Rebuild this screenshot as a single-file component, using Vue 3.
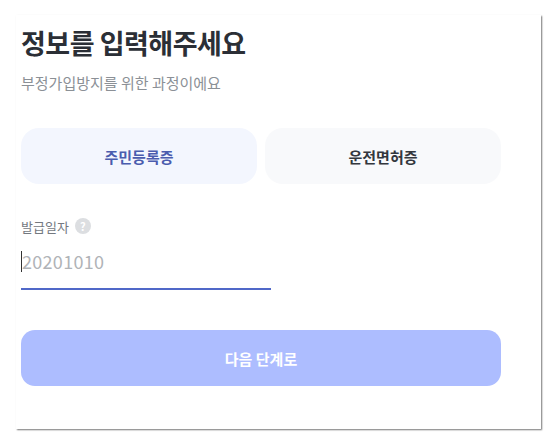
<script setup>
const tabs = [
  { label: '주민등록증', active: true },
  { label: '운전면허증', active: false },
]
</script>

<template>
  <main class="page">
    <section class="card">
      <h1 class="title">정보를 입력해주세요</h1>
      <p class="subtitle">부정가입방지를 위한 과정이에요</p>
      <div class="tabs">
        <button v-for="tab in tabs" :key="tab.label" class="tab" :class="{ active: tab.active }">
          {{ tab.label }}
        </button>
      </div>
      <div class="label-row">
        <span class="label">발급일자</span>
        <span class="help">?</span>
      </div>
      <div class="field">
        <span class="caret"></span>
        <span class="placeholder">20201010</span>
      </div>
      <button class="next">다음 단계로</button>
    </section>
  </main>
</template>

<style>
html, body { margin: 0; background: #fff; }
</style>

<style scoped>
.page {
  width: 555px;
  height: 443px;
  padding: 15px 0 0 16px;
  box-sizing: border-box;
  overflow: hidden;
  font-family: "Noto Sans CJK KR", "Noto Sans", sans-serif;
}
.card {
  width: 525px;
  height: 414px;
  box-sizing: border-box;
  padding: 9px 0 0 5px;
  background: #fff;
  box-shadow: 1px 1px 1.5px #777;
}
.title {
  margin: 0;
  font-size: 27px;
  line-height: 38px;
  font-weight: 700;
  letter-spacing: -0.5px;
  color: #2b2f36;
}
.subtitle {
  margin: 11px 0 0;
  font-size: 15px;
  line-height: 20px;
  color: #8b9096;
}
.tabs {
  display: flex;
  gap: 8px;
  margin-top: 35px;
}
.tab {
  width: 236px;
  height: 56px;
  border: 0;
  border-radius: 18px;
  background: #f8f9fb;
  font: 700 15px "Noto Sans CJK KR", sans-serif;
  color: #33373d;
}
.tab.active {
  background: #f3f6fe;
  color: #4a5cae;
}
.label-row {
  display: flex;
  align-items: center;
  gap: 6px;
  margin-top: 32px;
  height: 20px;
}
.label {
  font-size: 13px;
  color: #74797f;
}
.help {
  width: 16px;
  height: 16px;
  border-radius: 50%;
  background: #dcdee1;
  color: #fff;
  font-size: 11px;
  font-weight: 700;
  line-height: 16px;
  text-align: center;
}
.field {
  display: flex;
  align-items: center;
  width: 250px;
  height: 47px;
  box-sizing: border-box;
  border-bottom: 2px solid #5068c8;
  padding-bottom: 9px;
  margin-top: 7px;
}
.caret {
  width: 1px;
  height: 21px;
  background: #333;
}
.placeholder {
  font-family: "Noto Sans CJK KR", sans-serif;
  font-size: 18px;
  color: #b0b3b7;
  letter-spacing: 0.3px;
}
.next {
  display: block;
  width: 480px;
  height: 56px;
  margin-top: 40px;
  border: 0;
  border-radius: 14px;
  background: #adbdff;
  color: #fff;
  font: 700 15px "Noto Sans CJK KR", sans-serif;
}
</style>
